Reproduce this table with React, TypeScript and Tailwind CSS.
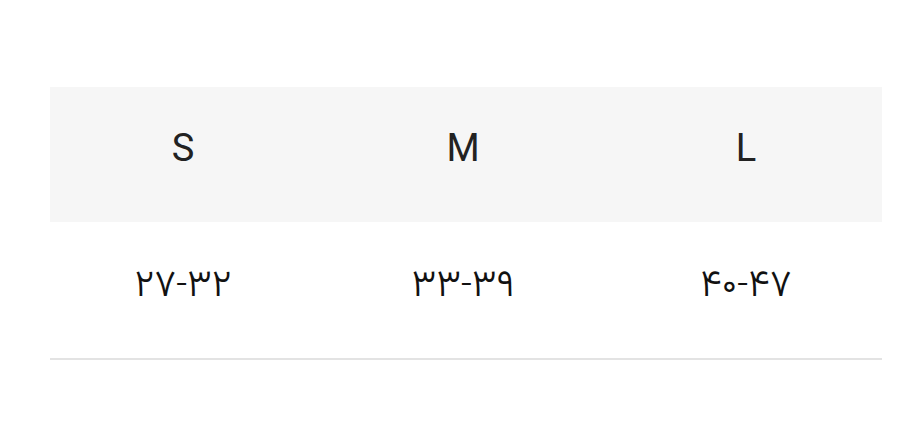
const sizes = [
  { h: "S", v: "۲۷-۳۲" },
  { h: "M", v: "۳۳-۳۹" },
  { h: "L", v: "۴۰-۴۷" },
];

export default function App() {
  return (
    <div className="w-[923px] h-[437px] bg-white pt-[87px] pl-[50px]">
      <div className="w-[832px]">
        <div className="grid grid-cols-[266px_294px_272px] bg-[#f6f6f6] h-[135px]">
          {sizes.map((s) => (
            <div
              key={s.h}
              className="flex justify-center pt-[42px] text-[38px] leading-[38px] text-[#222222] font-['Roboto',Vazirmatn,sans-serif]"
            >
              {s.h}
            </div>
          ))}
        </div>
        <div className="grid grid-cols-[266px_294px_272px] h-[138px] border-b-2 border-[#e3e3e3]">
          {sizes.map((s) => (
            <div
              key={s.h}
              className="flex justify-center pt-[41px] text-[38px] leading-[40px] font-light text-[#111111] font-['Roboto',Vazirmatn,sans-serif]"
            >
              {s.v}
            </div>
          ))}
        </div>
      </div>
    </div>
  );
}
